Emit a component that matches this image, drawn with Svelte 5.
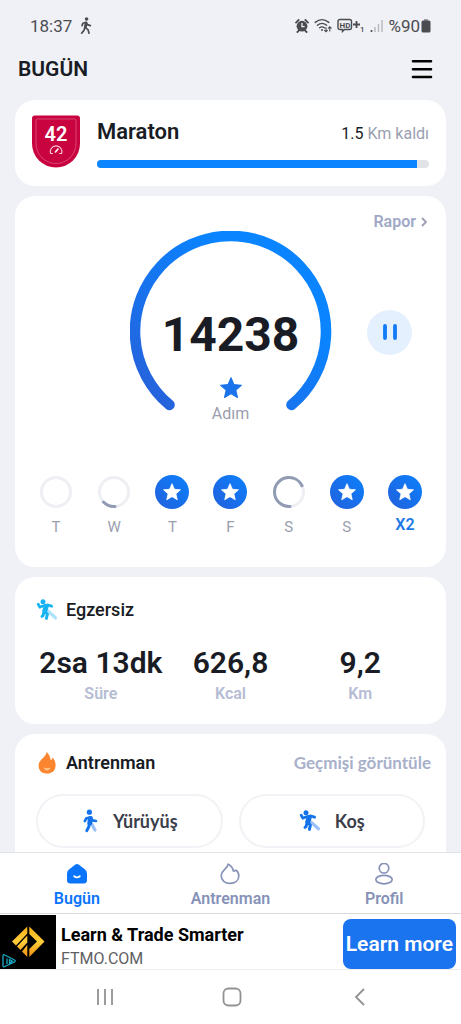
<script lang="ts">
  type Day = { label: string; progress: number; today?: boolean };

  const steps = 14238;

  const week: Day[] = [
    { label: 'T', progress: 0 },
    { label: 'W', progress: 14 },
    { label: 'T', progress: 100 },
    { label: 'F', progress: 100 },
    { label: 'S', progress: 69 },
    { label: 'S', progress: 100 },
    { label: 'X2', progress: 100, today: true }
  ];

  const stats = [
    { value: '2sa 13dk', label: 'Süre' },
    { value: '626,8', label: 'Kcal' },
    { value: '9,2', label: 'Km' }
  ];

  const star =
    'M12 1.6 15 8.6 22.6 9.3 16.9 14.3 18.6 21.7 12 17.8 5.4 21.7 7.1 14.3 1.4 9.3 9 8.6Z';
</script>

{#snippet runner(color: string, trail: string)}
  <svg width="22" height="22" viewBox="0 0 22 22" fill="none" stroke-linecap="round" stroke-linejoin="round" aria-hidden="true">
    <path d="M11.5 11.6 19.4 18.800" stroke={trail} stroke-width="3.200" />
    <circle cx="7" cy="2.800" r="2.500" fill={color} />
    <path d="M2.200 5.200 3.800 8.200 7.400 6.800 12 6 15.600 7.200" stroke={color} stroke-width="2.800" />
    <path d="M10.200 7.600 8.800 11.600" stroke={color} stroke-width="5" />
    <path d="M8.800 12.200 11.400 15.200 10.400 19.400M8 12.800 7 16.600 6 17.400" stroke={color} stroke-width="3" />
  </svg>
{/snippet}

<div class="app">
  <div class="status">
    <div class="status-side">
      <span>18:37</span>
      <svg width="12" height="18" viewBox="0 0 12 18" fill="none" stroke="#4b4c50" stroke-width="1.7" stroke-linecap="round" stroke-linejoin="round" aria-hidden="true">
        <circle cx="6.6" cy="2" r="1.8" fill="#4b4c50" stroke="none" />
        <path d="M2 8.6 3 6.2 6 5.2 7.4 7.6 10.4 8.6M6 5.4 4.8 10.4 8 12.6 9 16.2M4.8 10.4 4 13.4 1.6 16.2" />
        <path d="M6.2 6 5.6 10" stroke-width="2.6" />
      </svg>
    </div>
    <div class="status-side status-right">
      <svg width="14" height="14" viewBox="0 0 14 14" aria-hidden="true">
        <circle cx="7" cy="7.2" r="5.4" fill="#4b4c50" />
        <path d="M1 3.6 3.6 1M13 3.6 10.4 1M2.4 13 4 11.4M11.6 13 10 11.4" stroke="#4b4c50" stroke-width="1.8" stroke-linecap="round" />
        <path d="M7 4v3.6h2.6" fill="none" stroke="#eff1f6" stroke-width="1.3" />
      </svg>
      <svg width="18" height="15" viewBox="0 0 18 15" fill="none" stroke="#4b4c50" stroke-width="1.4" stroke-linecap="round" aria-hidden="true">
        <path d="M1.2 4.4q6.8-5.6 13.6 0M3.4 7.2q4.6-3.7 9.2 0M5.6 9.8q2.4-1.9 4.8 0" />
        <circle cx="8" cy="12" r="1" fill="#4b4c50" stroke="none" />
        <path d="M12 9.6v4M10.6 12.4l1.4 1.4 1.4-1.4M15.8 13v-4M14.4 10.2l1.4-1.4 1.4 1.4" stroke-width="1.1" />
      </svg>
      <svg width="28" height="15" viewBox="0 0 28 15" aria-hidden="true">
        <path d="M3 1.5h9.500q2 0 2 2v6q0 2-2 2H7.500l-2 2v-2H3q-2 0-2-2v-6q0-2 2-2Z" fill="none" stroke="#4b4c50" stroke-width="1.4" />
        <text x="2.5" y="9.5" font-size="8" font-weight="700" fill="#4b4c50">HD</text>
        <path d="M16 6.500h7M19.500 3v7" stroke="#4b4c50" stroke-width="1.8" />
        <text x="23" y="14" font-size="8" font-weight="500" fill="#4b4c50">1</text>
      </svg>
      <svg width="13" height="14" viewBox="0 0 13 14" aria-hidden="true">
        <path d="M1.5 11v2" stroke="#4b4c50" stroke-width="1.6" />
        <path d="M5 8v5M8.5 5v8M12 1v12" stroke="#b5b7bc" stroke-width="1.4" />
      </svg>
      <span class="battery">%90
        <svg width="10" height="14" viewBox="0 0 10 14" aria-hidden="true">
          <path d="M3 0h4v2H3z" fill="#9a9ca1" />
          <rect x="0.5" y="1.5" width="9" height="12" rx="1.6" fill="#4b4c50" />
        </svg>
      </span>
    </div>
  </div>

  <header>
    <h1>BUGÜN</h1>
    <button class="menu" aria-label="Menü">
      <svg width="22" height="20" viewBox="0 0 22 20" stroke="#000" stroke-width="2.6" stroke-linecap="round" aria-hidden="true">
        <path d="M2 2.3h18M2 10.2h18M2 18h18" />
      </svg>
    </button>
  </header>

  <main>
    <section class="card goal">
      <svg class="badge" width="48" height="54" viewBox="0 0 48 54" aria-hidden="true">
        <path d="M3 0.5h42q3 0 3 3V28.500a24 24 0 0 1-48 0V3.500q0-3 3-3Z" fill="#c9033f" />
        <path d="M5.5 4h37q1.500 0 1.500 1.500v23a20 20 0 0 1-40 0v-23Q4 4 5.500 4Z" fill="none" stroke="#e2557f" stroke-width="0.8" />
        <text x="24" y="26" text-anchor="middle" font-size="20" font-weight="600" fill="#fff">42</text>
        <path d="M18.600 38.500a5.800 5.800 0 1 1 11 0M20.800 38.500h-2.200M29.600 38.500h-2.200" fill="none" stroke="#fbd5e1" stroke-width="1.1" />
        <path d="M23.500 37 26 34" stroke="#fff" stroke-width="1.6" stroke-linecap="round" />
      </svg>
      <div class="goal-body">
        <div class="goal-head">
          <h2>Maraton</h2>
          <span class="left"><b>1.5</b> Km kaldı</span>
        </div>
        <div class="bar"><div class="bar-fill" style="width:96.5%"></div></div>
      </div>
    </section>

    <section class="card today">
      <a class="report" href="#rapor">
        Rapor
        <svg width="6" height="10" viewBox="0 0 6 10" fill="none" stroke="#9a9db2" stroke-width="1.8" aria-hidden="true"><path d="M1 1l4 4-4 4" /></svg>
      </a>

      <div class="dial-row">
        <div class="dial">
          <svg class="ring" viewBox="0 0 202 202" aria-hidden="true">
            <defs>
              <linearGradient id="ring" x1="0" y1="1" x2="0.7" y2="0.3">
                <stop offset="0.1" stop-color="#2563dc" />
                <stop offset="1" stop-color="#0a84ff" />
              </linearGradient>
            </defs>
            <path d="M39.500 173.900A95.500 95.500 0 1 1 161.500 173.900" fill="none" stroke="url(#ring)" stroke-width="10.6" stroke-linecap="round" />
          </svg>
          <div class="count">
            <strong>{steps}</strong>
            <svg width="24" height="24" viewBox="0 0 24 24" aria-hidden="true">
              <path d={star} fill="#1a73ea" stroke="#1a73ea" stroke-width="1" stroke-linejoin="round" />
            </svg>
            <span>Adım</span>
          </div>
        </div>
        <button class="pause" aria-label="Duraklat">
          <svg width="16" height="18" viewBox="0 0 16 18" stroke="#0f7bf5" stroke-width="3.8" stroke-linecap="round" aria-hidden="true"><path d="M3 3v12M13 3v12" /></svg>
        </button>
      </div>

      <ul class="week">
        {#each week as day}
          <li class:today-mark={day.today}>
            <svg width="34" height="34" viewBox="0 0 34 34" aria-hidden="true">
              {#if day.progress >= 100}
                <defs>
                  <linearGradient id="disc" x1="0" y1="1" x2="1" y2="0">
                    <stop offset="0" stop-color="#2260dc" />
                    <stop offset="1" stop-color="#0c80fb" />
                  </linearGradient>
                </defs>
                <circle cx="17" cy="17" r="17" fill="url(#disc)" />
                <path d={star} transform="translate(7.4 7.4) scale(0.8)" fill="#fff" stroke="#fff" stroke-linejoin="round" />
              {:else}
                <circle cx="17" cy="17" r="14.5" fill="none" stroke="#eeeff3" stroke-width="3" />
                {#if day.progress > 0}
                  <circle cx="17" cy="17" r="14.5" fill="none" stroke="#919bb4" stroke-width="3" stroke-linecap="round" pathLength="100" stroke-dasharray="{day.progress} 100" transform="rotate(86 17 17)" />
                {/if}
              {/if}
            </svg>
            <span>{day.label}</span>
          </li>
        {/each}
      </ul>
    </section>

    <section class="card exercise">
      <h3>{@render runner('#18b4f2', '#a9e2fb')} Egzersiz</h3>
      <dl>
        {#each stats as stat}
          <div>
            <dd>{stat.value}</dd>
            <dt>{stat.label}</dt>
          </div>
        {/each}
      </dl>
    </section>

    <section class="card workout">
      <div class="workout-head">
        <h3>
          <svg width="22" height="24" viewBox="0 0 22 24" aria-hidden="true">
            <path d="M10.600 1C13 3.200 14.400 6 14.800 9.200 15.800 8.600 16.400 7.600 16.600 6.400 18.600 8.600 19.600 11.400 19.600 14.200 19.600 19.400 16 22.600 11 22.600S2.600 19.400 2.600 14.400C2.600 8.600 9.600 7 10.600 1Z" fill="#fb862f" />
            <path d="M7.600 16.600q3.400 1.400 6.800 0Q13.800 19.400 11 19.400t-3.400-2.800Z" fill="#ffc58c" />
          </svg>
          Antrenman
        </h3>
        <a href="#gecmis">Geçmişi görüntüle</a>
      </div>
      <div class="choices">
        <button>
          <svg width="18" height="24" viewBox="0 0 18 24" fill="none" stroke-linecap="round" stroke-linejoin="round" aria-hidden="true">
            <path d="M11 15.400 14 21" stroke="#9cc1fa" stroke-width="3.200" />
            <circle cx="8.400" cy="3.200" r="2.600" fill="#1473ea" />
            <path d="M3.800 12.200 5.400 9.200 9.400 8.400 11.600 11.400 15 12" stroke="#1473ea" stroke-width="2.600" />
            <path d="M9.400 9.400 8.800 14" stroke="#1473ea" stroke-width="5" />
            <path d="M8.600 14 7.800 17.800 5.800 21.600" stroke="#1473ea" stroke-width="3" />
          </svg>
          Yürüyüş
        </button>
        <button>{@render runner('#1473ea', '#9cc1fa')} Koş</button>
      </div>
    </section>
  </main>

  <nav class="tabs">
    <a class="active" href="#bugun" aria-current="page">
      <svg width="22" height="22" viewBox="0 0 22 22" aria-hidden="true">
        <path d="M9 1.800q2-1.400 4 0l6 4.600q2 1.600 2 4V17q0 3.500-3.500 3.500h-13Q1 20.500 1 17v-6.600q0-2.400 2-4Z" fill="#0a75fa" />
        <path d="M8.200 13.200q2.800 2.400 5.600 0" fill="none" stroke="#fff" stroke-width="1.8" stroke-linecap="round" />
      </svg>
      Bugün
    </a>
    <a href="#antrenman">
      <svg width="22" height="22" viewBox="0 0 22 22" fill="none" stroke="#8792b8" stroke-width="1.7" stroke-linejoin="round" aria-hidden="true">
        <path d="M9.200 1.200C12 2.600 13.800 5 14.400 8q1.400.2 2.600-.8C18.800 8.600 19.800 10.600 19.800 12.800 19.800 17.600 16 20.400 11 20.400S2.200 17.400 2.200 12.400C2.200 7.200 8 6.600 9.200 1.200Z" />
      </svg>
      Antrenman
    </a>
    <a href="#profil">
      <svg width="22" height="22" viewBox="0 0 22 22" fill="none" stroke="#8792b8" stroke-width="1.7" aria-hidden="true">
        <circle cx="11" cy="5.2" r="4.800" />
        <ellipse cx="11" cy="16.600" rx="8.200" ry="4.200" />
      </svg>
      Profil
    </a>
  </nav>

  <aside class="ad">
    <svg width="56" height="54" viewBox="0 0 56 54" aria-hidden="true">
      <defs>
        <linearGradient id="gold" x1="0" y1="0" x2="0" y2="1">
          <stop offset="0" stop-color="#f7ae19" />
          <stop offset="0.5" stop-color="#ffcf3a" />
          <stop offset="1" stop-color="#f18b12" />
        </linearGradient>
      </defs>
      <path d="M0 0h56v54H0z" fill="#000" />
      <path d="M27.300 11.500v7L16 30.500l-4-4ZM27.300 20.500v7L20.500 35l-3.500-3.500ZM27.300 30v12L22 36.500Z" fill="url(#gold)" />
      <path d="M29.300 11.500 44.500 26.500 29.300 42V34l7.700-7.500-7.700-7.500Z" fill="url(#gold)" />
      <path d="M3 41v9.500q0 2 1.800 1L14.500 47q1.500-1 0-2L4.800 40Q3 39 3 41ZM7 43.500v5.500M9.500 44.500v3.500l3-1.800Z" fill="none" stroke="#19a9c4" stroke-width="1.3" />
    </svg>
    <div class="ad-text">
      <strong>Learn &amp; Trade Smarter</strong>
      <span>FTMO.COM</span>
    </div>
    <button>Learn more</button>
  </aside>

  <div class="system">
    <button aria-label="Son uygulamalar">
      <svg width="18" height="18" viewBox="0 0 18 18" stroke="#929292" stroke-width="1.8" aria-hidden="true"><path d="M2 1v16M9 1v16M16 1v16" /></svg>
    </button>
    <button aria-label="Ana ekran">
      <svg width="20" height="20" viewBox="0 0 20 20" fill="none" stroke="#929292" stroke-width="1.8" aria-hidden="true"><rect x="1.5" y="1.5" width="17" height="17" rx="5" /></svg>
    </button>
    <button aria-label="Geri">
      <svg width="12" height="18" viewBox="0 0 12 18" fill="none" stroke="#929292" stroke-width="1.8" aria-hidden="true"><path d="M10 1 2 9l8 8" /></svg>
    </button>
  </div>
</div>

<style>
  :global(body) {
    margin: 0;
    background: #eff1f6;
  }

  .app {
    display: flex;
    flex-direction: column;
    height: 100vh;
    font-family: Roboto, sans-serif;
    color: #191c24;
  }

  h1, h2, h3, ul, dl, dd {
    margin: 0;
    padding: 0;
  }

  svg {
    display: block;
    flex: none;
  }

  a {
    text-decoration: none;
  }

  button {
    padding: 0;
    border: 0;
    background: none;
    font: inherit;
    color: inherit;
    cursor: pointer;
  }

  .status {
    display: flex;
    justify-content: space-between;
    align-items: center;
    height: 51px;
    padding: 0 30px;
    font-size: 17px;
    color: #4b4c50;
  }

  .status-side {
    display: flex;
    align-items: center;
    gap: 8px;
  }

  .status-right {
    gap: 5px;
  }

  .battery {
    display: flex;
    align-items: center;
    gap: 1px;
  }

  header {
    display: flex;
    justify-content: space-between;
    align-items: center;
    height: 36px;
    padding: 0 28px 13px 18px;
  }

  h1 {
    font-size: 21px;
    font-weight: 600;
    line-height: 24px;
  }

  main {
    flex: 1;
    min-height: 0;
    display: flex;
    flex-direction: column;
    gap: 10px;
    padding: 0 15px;
    overflow-y: auto;
    scrollbar-width: none;
  }

  .card {
    flex: none;
    border-radius: 20px;
    background: #fff;
  }

  .goal {
    display: flex;
    gap: 17px;
    padding: 15px 17px 17px;
  }

  .goal-body {
    flex: 1;
  }

  .goal-head {
    display: flex;
    justify-content: space-between;
    align-items: baseline;
    padding-top: 5px;
  }

  h2 {
    font-size: 22px;
    font-weight: 600;
    line-height: 24px;
  }

  .left {
    font-size: 16px;
    color: #989eb0;
  }

  .left b {
    font-weight: 400;
    color: #191c24;
  }

  .bar {
    height: 8px;
    margin-top: 16px;
    border-radius: 4px;
    background: #e2e3e6;
    overflow: hidden;
  }

  .bar-fill {
    height: 100%;
    background: #0a84ff;
  }

  .today {
    padding: 17px 12px 30px;
  }

  .report {
    display: flex;
    justify-content: flex-end;
    align-items: center;
    gap: 5px;
    padding-right: 7px;
    font-size: 16px;
    font-weight: 600;
    line-height: 18px;
    color: #a0a8c6;
  }

  .dial-row {
    display: grid;
    grid-template-columns: 1fr 202px 1fr;
    align-items: center;
  }

  .dial {
    grid-column: 2;
    display: grid;
    height: 202px;
  }

  .ring,
  .count {
    grid-area: 1 / 1;
  }

  .count {
    display: flex;
    flex-direction: column;
    align-items: center;
    padding-top: 76px;
  }

  .count strong {
    font-size: 48px;
    font-weight: 700;
    line-height: 56px;
  }

  .count svg {
    margin: 13px 0 4px;
  }

  .count span {
    font-size: 16px;
    line-height: 20px;
    color: #9a9eae;
  }

  .pause {
    justify-self: end;
    display: grid;
    place-items: center;
    width: 45px;
    height: 45px;
    margin-right: 22px;
    border-radius: 50%;
    background: #e5f0fe;
  }

  .week {
    display: grid;
    grid-template-columns: repeat(7, 1fr);
    margin-top: 42px;
    list-style: none;
  }

  .week li {
    display: flex;
    flex-direction: column;
    align-items: center;
    gap: 8px;
    font-size: 15px;
    line-height: 20px;
    color: #9a9eae;
  }

  .week .today-mark {
    gap: 6px;
    font-size: 16px;
    font-weight: 600;
    color: #1f7ae6;
  }

  .exercise {
    padding: 22px 21px 20px;
  }

  h3 {
    display: flex;
    align-items: center;
    gap: 8px;
    font-size: 18px;
    font-weight: 500;
    line-height: 22px;
  }

  dl {
    display: grid;
    grid-template-columns: repeat(3, 1fr);
    margin-top: 24px;
    text-align: center;
  }

  dl div {
    display: flex;
    flex-direction: column;
    white-space: nowrap;
  }

  dd {
    font-size: 30px;
    font-weight: 600;
    line-height: 36px;
  }

  dt {
    order: 1;
    margin-top: 3px;
    font-size: 16px;
    font-weight: 600;
    line-height: 20px;
    color: #b5bcd3;
  }

  .workout {
    padding: 17px 21px 22px;
  }

  .workout-head {
    display: flex;
    justify-content: space-between;
    align-items: center;
    margin-right: -6px;
  }

  .workout-head h3 {
    font-weight: 600;
  }

  .workout-head a {
    font-family: Lato, sans-serif;
    font-size: 17px;
    font-weight: 700;
    line-height: 20px;
    color: #a8b0ca;
  }

  .choices {
    display: grid;
    grid-template-columns: 1fr 1fr;
    gap: 16px;
    margin-top: 19px;
  }

  .choices button {
    display: flex;
    justify-content: center;
    align-items: center;
    gap: 14px;
    height: 54px;
    border: 2px solid #f1f2f5;
    border-radius: 27px;
    font-family: Lato, sans-serif;
    font-size: 18px;
    font-weight: 700;
    color: #3b3e4a;
  }

  .tabs {
    display: grid;
    grid-template-columns: repeat(3, 1fr);
    border-top: 1px solid #e0e2e8;
    background: #fff;
  }

  .tabs a {
    display: flex;
    flex-direction: column;
    align-items: center;
    gap: 4px;
    padding: 10px 0 4px;
    font-size: 16px;
    font-weight: 600;
    line-height: 20px;
    color: #8792b8;
  }

  .tabs .active {
    color: #0a75fa;
  }

  .ad {
    display: flex;
    align-items: center;
    gap: 5px;
    padding-right: 5px;
    border-top: 1px solid #d9dadd;
    border-bottom: 1px solid #eeeeee;
    background: #fff;
  }

  .ad-text {
    flex: 1;
    display: flex;
    flex-direction: column;
    gap: 4px;
    padding-top: 11px;
    color: #5f6063;
    font-size: 16px;
    line-height: 20px;
  }

  .ad-text strong {
    font-size: 18px;
    font-weight: 700;
    color: #000;
  }

  .ad button {
    align-self: flex-end;
    height: 50px;
    padding: 0 3px;
    border-radius: 8px;
    background: #1a73ef;
    font-size: 21px;
    font-weight: 600;
    color: #fff;
  }

  .system {
    display: grid;
    grid-template-columns: repeat(3, 28%);
    justify-content: center;
    height: 54px;
    padding-left: 4px;
    background: #fff;
  }

  .system button {
    display: grid;
    place-items: center;
  }
</style>
